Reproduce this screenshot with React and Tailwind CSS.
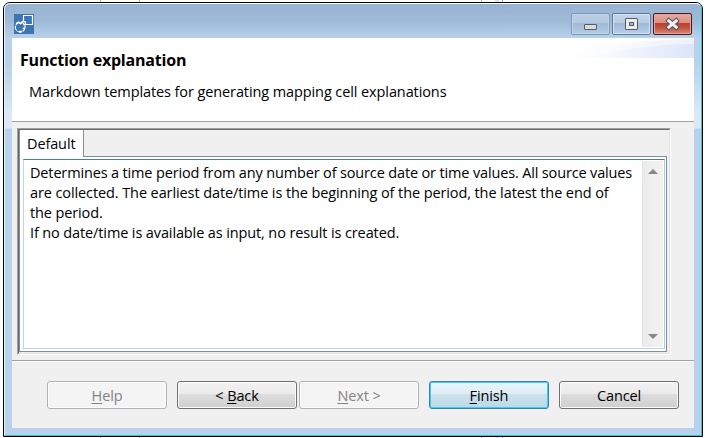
import React from "react";

function AppIcon() {
  return (
    <svg width="20" height="20" viewBox="0 0 20 20">
      <rect width="20" height="20" fill="#3b75b2" />
      <path d="M9.5 8V1.5h9v9H12" fill="none" stroke="#fff" strokeWidth="1.2" />
      <circle cx="6.2" cy="13.2" r="4.9" fill="none" stroke="#fff" strokeWidth="1.1" strokeDasharray="5 0.7" />
      <path d="M2 9.6l2.5-1.4 2 1.6 2.2-2.6 2.6.6.2 2.6-2 .6M9 15l1.6-1.6M5 17.5h3" fill="none" stroke="#fff" strokeWidth="1.4" />
    </svg>
  );
}

function CaptionButton({ className, children }) {
  return (
    <div className={"flex h-[22px] w-[39px] items-center justify-center rounded-[2px] border " + className}>
      {children}
    </div>
  );
}

function Caption() {
  return (
    <div className="flex h-[34px] shrink-0 justify-between rounded-t-[5px] bg-[linear-gradient(#98b4d2_0%,#9fb9d6_50%,#a9c4e1_72%,#b9d1ea_100%)]">
      <div className="pt-[10px] pl-[9px]">
        <AppIcon />
      </div>
      <div className="flex gap-[2px] pt-[9px] pr-[9px]">
        <CaptionButton className="border-[#8199b8] bg-[linear-gradient(#bccfe3_0%,#b3c8df_46%,#a1bad6_47%,#b3cce5_100%)] shadow-[inset_0_0_0_1px_#c1d3e8]">
          <svg width="13" height="20" viewBox="0 0 13 20">
            <rect x="0.5" y="10.5" width="12" height="5" rx="0.5" fill="#dcdad8" stroke="#555969" />
          </svg>
        </CaptionButton>
        <CaptionButton className="border-[#62799b] bg-[linear-gradient(#c2d4e8_0%,#b7cce2_46%,#9eb9d6_47%,#b4d0e9_100%)] shadow-[inset_0_0_0_1px_#d3e2f2]">
          <svg width="13" height="20" viewBox="0 0 13 20">
            <rect x="0.5" y="4.5" width="12" height="11" rx="0.5" fill="#ececec" stroke="#555969" />
            <rect x="4.5" y="8.5" width="4" height="3" fill="#a5bdd8" stroke="#555969" />
          </svg>
        </CaptionButton>
        <CaptionButton className="border-[#4a1620] bg-[linear-gradient(#e7aba2_0%,#dc8d81_46%,#b93f29_47%,#c25440_70%,#d98c75_100%)] shadow-[inset_0_0_0_1px_#e6a79a]">
          <svg width="15" height="20" viewBox="0 0 15 20">
            <path d="M3.8 6.8l7.4 6.4M11.2 6.8l-7.4 6.4" stroke="#535466" strokeWidth="5" strokeLinecap="square" />
            <path d="M3.8 6.8l7.4 6.4M11.2 6.8l-7.4 6.4" stroke="#f2f1f1" strokeWidth="3" strokeLinecap="square" />
          </svg>
        </CaptionButton>
      </div>
    </div>
  );
}

function Header() {
  return (
    <div className="relative h-[84px] shrink-0 border-b border-[#a0a0a0] bg-white">
      <svg className="absolute top-0 right-0" width="142" height="20" viewBox="0 0 142 20">
        <defs>
          <linearGradient id="swoosh">
            <stop offset="0" stopColor="#fff" />
            <stop offset="0.4" stopColor="#f7f9fe" />
            <stop offset="1" stopColor="#dde5f8" />
          </linearGradient>
        </defs>
        <path d="M0 20Q50 3 142 1V20Z" fill="url(#swoosh)" />
        <path d="M40 20Q80 7 142 6V1Q50 3 0 20Z" fill="#fff" opacity=".45" />
      </svg>
      <h1 className="pt-[12px] pl-[8px] text-[16px] leading-[20px] font-bold tracking-[-0.2px]">
        Function explanation
      </h1>
      <p className="pt-[12px] pl-[17px] leading-[20px] tracking-[-0.1px]">
        Markdown templates for generating mapping cell explanations
      </p>
    </div>
  );
}

function ScrollBar() {
  return (
    <div className="flex w-[21px] shrink-0 flex-col items-center justify-between border-l border-[#e6e6e6] bg-[linear-gradient(90deg,#ececec,#f2f2f2)] py-[8px]">
      <svg width="10" height="5" viewBox="0 0 10 5"><path d="M0 5l5-5 5 5z" fill="#868686" /></svg>
      <svg width="10" height="5" viewBox="0 0 10 5"><path d="M0 0h10L5 5z" fill="#868686" /></svg>
    </div>
  );
}

function Explanation() {
  return (
    <div className="flex h-[190px] justify-between border border-t-[#3f7fb5] border-r-[#a5cde8] border-b-[#b5d6ec] border-l-[#b8d6ec] bg-white p-px">
      <div className="pt-[2px] pl-[5px] leading-[20px] whitespace-nowrap">
        <div className="tracking-[-0.15px]">Determines a time period from any number of source date or time values. All source values</div>
        <div className="tracking-[-0.1px]">are collected. The earliest date/time is the beginning of the period, the latest the end of</div>
        <div>the period.</div>
        <div>If no date/time is available as input, no result is created.</div>
      </div>
      <ScrollBar />
    </div>
  );
}

function TabPanel() {
  return (
    <div className="ml-[5px] mr-[23px] mt-[6px] h-[227px] border border-t-[#a0a0a0] border-r-white border-b-white border-l-[#a0a0a0]">
      <div className="h-full border border-t-[#696969] border-r-[#e3e3e3] border-b-[#e3e3e3] border-l-[#696969]">
        <div className="mr-[2px] flex h-[27px]">
          <div className="w-[65px] border-r border-l border-[#8c8e98] border-l-[#898c95] bg-white pt-[4px] pl-[7px] leading-[20px]">
            Default
          </div>
          <div className="grow border-b border-[#898c95]" />
        </div>
        <div className="mr-[2px] h-[195px] border-r border-b border-l border-[#898c95] bg-white pt-[2px] pr-px pl-[3px]">
          <Explanation />
        </div>
      </div>
    </div>
  );
}

const NORMAL = "border-[#707070] text-black shadow-[inset_0_0_0_1px_#fbfbfb] bg-[linear-gradient(#f2f2f2_0%,#ebebeb_46%,#dddddd_47%,#cfcfcf_100%)]";
const DISABLED = "border-[#adb2b5] text-[#838383] shadow-[inset_0_0_0_1px_#fcfcfc] bg-[#f4f4f4]";
const DEFAULT = "border-[#3c7fb1] text-black shadow-[inset_0_0_0_1px_#3bcdf4] bg-[linear-gradient(#eaf4fb_0%,#dfedf5_46%,#cde1ed_47%,#bdd8e7_100%)]";

function Button({ kind, children }) {
  return (
    <button className={"flex h-[28px] w-[120px] items-center justify-center rounded-[3px] border pt-px leading-[20px] whitespace-pre " + kind}>
      {children}
    </button>
  );
}

function Key({ children }) {
  return <span className="underline decoration-1 underline-offset-2">{children}</span>;
}

function Footer() {
  return (
    <div className="mt-[5px] flex grow border-t border-[#a0a0a0]">
      <div className="flex grow border-t border-white pt-[19px] pl-[35px]">
        <Button kind={DISABLED}><Key>H</Key>elp</Button>
        <div className="ml-[10px] flex gap-[2px]">
          <Button kind={NORMAL}>&lt; <Key>B</Key>ack</Button>
          <Button kind={DISABLED}><Key>N</Key>ext &gt;</Button>
        </div>
        <div className="ml-[10px] flex gap-[10px]">
          <Button kind={DEFAULT}><Key>F</Key>inish</Button>
          <Button kind={NORMAL}>Cancel</Button>
        </div>
      </div>
    </div>
  );
}

export default function App() {
  return (
    <div className="h-[438px] w-[705px] overflow-hidden bg-[linear-gradient(90deg,transparent_100px,#aaa_100px,#aaa_101px,transparent_101px,transparent_139px,#aaa_139px,#aaa_140px,transparent_140px,transparent_481px,#aaa_481px,#aaa_482px,transparent_482px,transparent_495px,#dfe6f5_495px,#dfe6f5_499px,transparent_499px,transparent_502px,#aaa_502px,#aaa_503px,transparent_503px)] pt-[2px] pl-[3px] font-['Open_Sans','Noto_Sans',sans-serif] text-[14.5px] tracking-[-0.12px] text-black">
      <div className="h-[435px] w-[700px] rounded-t-[7px] border border-black bg-[#b9d1ea]">
        <div className="flex h-full flex-col rounded-t-[6px] border border-t-white border-r-[#2fc4dc] border-b-[#2fc4dc] border-l-[#e8f2fb] bg-[linear-gradient(#b9d1ea_0px,#b9d1ea_60px,#dce8f5_110px,#dce8f5_124px,#b9d1ea_125px)]">
          <Caption />
          <div className="mr-[7px] ml-[7px] flex h-[390px] flex-col bg-[#f0f0f0]">
            <Header />
            <TabPanel />
            <Footer />
          </div>
        </div>
      </div>
    </div>
  );
}
